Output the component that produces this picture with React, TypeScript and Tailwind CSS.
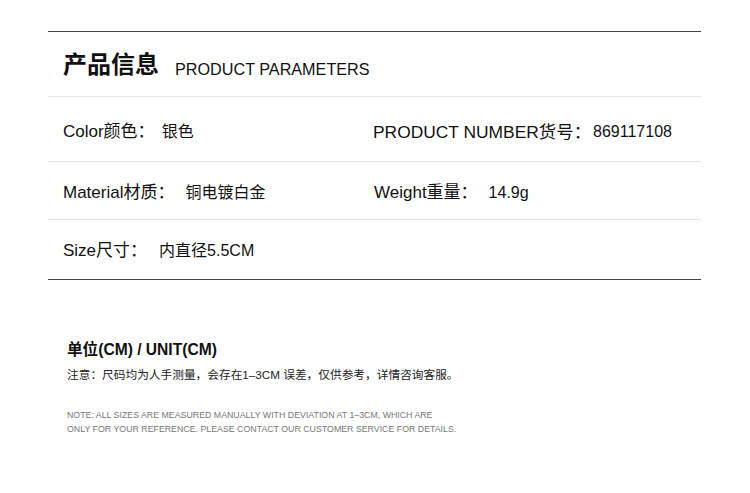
import React from "react";

const font = "font-['Liberation_Sans','Noto_Sans_CJK_SC',sans-serif]";

export default function App() {
  return (
    <div className={`w-[750px] h-[493px] bg-white text-[#111] ${font}`}>
      <div className="pt-[31px] ml-[48px] w-[653px]">
        {/* Header */}
        <div className="border-t border-[#444] h-[65px] flex items-center pl-[15px] pt-[1px]">
          <span className="text-[24px] font-bold leading-none">产品信息</span>
          <span className="ml-[16px] text-[16.2px] leading-none mt-[10px]">PRODUCT PARAMETERS</span>
        </div>
        {/* Row 1 */}
        <div className="border-t border-[#e5e5e5] h-[65px] flex items-center pl-[15px] pt-[6px]">
          <div className="w-[310px] flex items-center">
            <span className="text-[17px]">Color颜色：</span>
            <span className="ml-[7px] text-[16px]">银色</span>
          </div>
          <div className="flex items-center">
            <span className="text-[17.4px]">PRODUCT NUMBER货号：</span>
            <span className="ml-[2px] text-[16px]">869117108</span>
          </div>
        </div>
        {/* Row 2 */}
        <div className="border-t border-[#e5e5e5] h-[58px] flex items-center pl-[15px] pt-[4px]">
          <div className="w-[311px] flex items-center">
            <span className="text-[17px]">Material材质：</span>
            <span className="ml-[11px] text-[16px]">铜电镀白金</span>
          </div>
          <div className="flex items-center">
            <span className="text-[17px]">Weight重量：</span>
            <span className="ml-[11px] text-[16px]">14.9g</span>
          </div>
        </div>
        {/* Row 3 */}
        <div className="border-t border-b border-[#e5e5e5] border-b-[#444] h-[61px] flex items-center pl-[15px] pt-[2px]">
          <span className="text-[17px]">Size尺寸：</span>
          <span className="ml-[12px] text-[16px]">内直径5.5CM</span>
        </div>
      </div>

      {/* Bottom notes */}
      <div className="ml-[67px] mt-[61px]">
        <div className="text-[15.6px] font-bold leading-[18px]">单位(CM) / UNIT(CM)</div>
        <div className="mt-[8px] text-[11.7px] leading-[16px] text-[#222]">
          注意：尺码均为人手测量，会存在1–3CM 误差，仅供参考，详情咨询客服。
        </div>
        <div className="mt-[25px] text-[8.8px] leading-[14px] text-[#777]">
          <div>NOTE: ALL SIZES ARE MEASURED MANUALLY WITH DEVIATION AT 1–3CM, WHICH ARE</div>
          <div>ONLY FOR YOUR REFERENCE. PLEASE CONTACT OUR CUSTOMER SERVICE FOR DETAILS.</div>
        </div>
      </div>
    </div>
  );
}
